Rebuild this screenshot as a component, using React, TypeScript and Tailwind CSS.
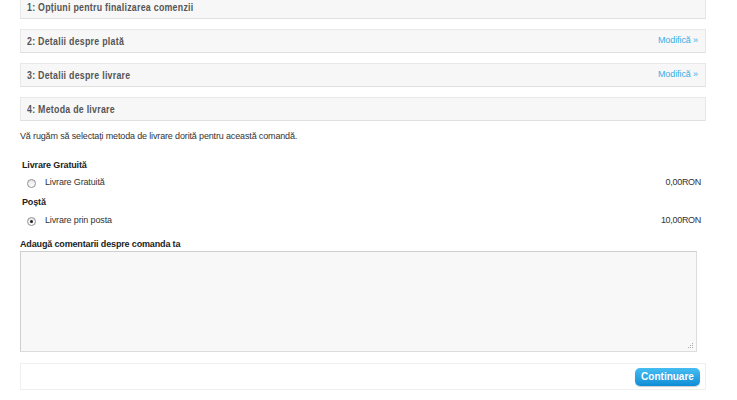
import { useState } from "react";

const steps = [
  { label: "1: Opțiuni pentru finalizarea comenzii", edit: false },
  { label: "2: Detalii despre plată", edit: true },
  { label: "3: Detalii despre livrare", edit: true },
  { label: "4: Metoda de livrare", edit: false },
];

function Radio({ checked, onClick }: { checked: boolean; onClick: () => void }) {
  return (
    <span
      onClick={onClick}
      className="flex h-[9px] w-[9px] items-center justify-center rounded-full border border-[#8f8f8f] bg-gradient-to-b from-[#e6e6e6] to-white"
    >
      {checked && <span className="h-[3px] w-[3px] rounded-full bg-[#222]" />}
    </span>
  );
}

export default function App() {
  const [method, setMethod] = useState("posta");

  return (
    <div className="w-[737px] h-[400px] overflow-hidden bg-white font-['Liberation_Sans',Arial,sans-serif] text-[#333]">
      <div className="ml-[20px] w-[686px] mt-[-5px]">
        {steps.map((s, i) => (
          <div
            key={s.label}
            className={`flex h-[24px] items-center justify-between border border-[#e8e8e8] border-b-[#e0e0e0] bg-[#f7f7f7] pl-[6px] pr-[7px] ${i < 3 ? "mb-[10px]" : ""}`}
          >
            <span className="inline-block origin-left scale-x-[0.88] whitespace-nowrap text-[10px] font-bold tracking-[0.3px] text-[#555]">
              {s.label}
            </span>
            {s.edit && (
              <a className="text-[9px] tracking-[-0.1px] text-[#3aaee6]">Modifică »</a>
            )}
          </div>
        ))}

        <p className="mt-[9px] text-[9px] leading-[12px] tracking-[-0.15px]">
          Vă rugăm să selectați metoda de livrare dorită pentru această comandă.
        </p>

        <div className="mt-[17px] pl-[2px] pr-[5px] text-[9px] tracking-[-0.15px]">
          <div className="font-bold leading-[12px] text-[#222]">Livrare Gratuită</div>
          <div className="mt-[6px] flex h-[12px] items-center justify-between">
            <label className="flex items-center gap-[9px] pl-[5px]">
              <Radio checked={method === "gratuit"} onClick={() => setMethod("gratuit")} />
              <span>Livrare Gratuită</span>
            </label>
            <span className="tracking-[-0.3px]">0,00RON</span>
          </div>
          <div className="mt-[7px] font-bold leading-[12px] text-[#222]">Poștă</div>
          <div className="mt-[7px] flex h-[12px] items-center justify-between">
            <label className="flex items-center gap-[9px] pl-[5px]">
              <Radio checked={method === "posta"} onClick={() => setMethod("posta")} />
              <span>Livrare prin posta</span>
            </label>
            <span className="tracking-[-0.3px]">10,00RON</span>
          </div>
        </div>

        <div className="mt-[11px] text-[9px] font-bold leading-[12px] tracking-[-0.15px] text-[#222]">
          Adaugă comentarii despre comanda ta
        </div>
        <div className="relative mt-[1px] w-[677px]">
          <textarea className="block h-[101px] w-[677px] resize-none border border-[#dcdcdc] border-t-[#cfcfcf] border-l-[#cfcfcf] bg-[#f8f8f8] outline-none" />
          <svg className="absolute bottom-[3px] right-[3px]" width="7" height="7" viewBox="0 0 7 7">
            <rect x="5" y="1" width="1" height="1" fill="#aaa" />
            <rect x="3" y="3" width="1" height="1" fill="#aaa" />
            <rect x="5" y="3" width="1" height="1" fill="#aaa" />
            <rect x="1" y="5" width="1" height="1" fill="#aaa" />
            <rect x="3" y="5" width="1" height="1" fill="#aaa" />
            <rect x="5" y="5" width="1" height="1" fill="#aaa" />
          </svg>
        </div>

        <div className="mt-[11px] flex h-[27px] items-center justify-end border border-[#efefef] bg-white pr-[5px]">
          <button className="h-[18px] w-[65px] rounded-[5px] bg-gradient-to-b from-[#45bdf2] to-[#0c8dd6] text-[10px] font-bold text-white shadow-[0_1px_1px_rgba(0,0,0,0.2)]">
            Continuare
          </button>
        </div>
      </div>
    </div>
  );
}
